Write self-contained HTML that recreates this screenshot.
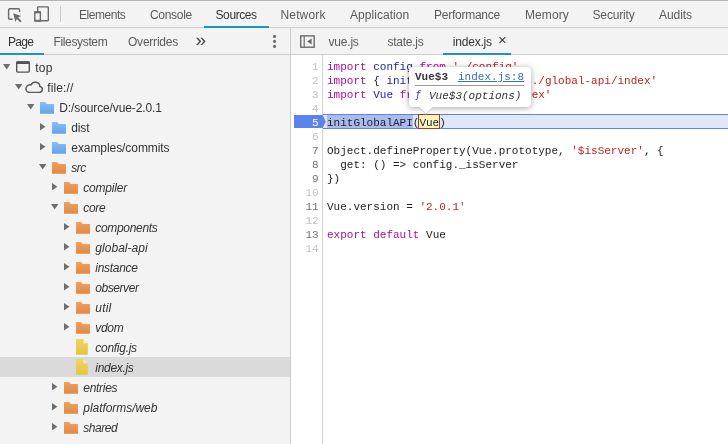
<!DOCTYPE html>
<html><head><meta charset="utf-8">
<style>
html,body{margin:0;padding:0;}
body{width:728px;height:444px;overflow:hidden;background:#fff;position:relative;font-family:"Liberation Sans",sans-serif;font-size:12px;color:#333;}
.abs{position:absolute;}
#topbar{left:0;top:0;width:728px;height:27px;background:#f3f3f3;border-top:1px solid #b4b4b4;border-bottom:1px solid #cdcdcd;box-sizing:content-box;height:26px;}
.tab{position:absolute;top:1px;height:26px;line-height:28px;color:#5a5a5a;white-space:nowrap;font-size:12px;}
.tab.sel{color:#333;}
#row2l{left:0;top:28px;width:290px;height:26px;background:#f3f3f3;border-bottom:1px solid #cdcdcd;}
#row2r{left:291px;top:28px;width:437px;height:26px;background:#f3f3f3;border-bottom:1px solid #cdcdcd;}
.t2{position:absolute;top:0;height:26px;line-height:29px;color:#5a5a5a;white-space:nowrap;}
.t2.sel{color:#333;}
#left{left:0;top:55px;width:290px;height:389px;background:#f3f3f3;}
#vdiv{left:290px;top:28px;width:1px;height:416px;background:#cdcdcd;}
.row{position:absolute;left:0;width:290px;height:20px;line-height:20px;white-space:nowrap;color:#333;}
.row span{position:absolute;top:1px;}
.row i{font-style:italic;}
.arr{position:absolute;width:0;height:0;}
.arr.d{border-left:4px solid transparent;border-right:4px solid transparent;border-top:6px solid #6e6e6e;top:7px;}
.arr.r{border-top:4px solid transparent;border-bottom:4px solid transparent;border-left:6px solid #6e6e6e;top:6px;}
.fold{position:absolute;top:4px;width:15px;height:12px;}
#gutter{left:291px;top:55px;width:31px;height:389px;background:#fff;border-right:1px solid #d2d2d2;}
.ln{position:absolute;right:4px;width:30px;text-align:right;font-family:"Liberation Mono",monospace;font-size:11px;line-height:14px;color:#c2c2c2;}
.cl{position:absolute;left:327px;font-family:"Liberation Mono",monospace;font-size:11px;line-height:14px;white-space:pre;color:#222;}
.pm{font-family:"Liberation Mono",monospace;font-size:11px;line-height:14px;white-space:pre;}
.k{color:#aa0d91;} .s{color:#b8251c;} .d{color:#1a1aa6;}
</style></head><body><div id="app" style="will-change:transform;position:absolute;left:0;top:0;width:728px;height:444px;overflow:hidden">
<div id="topbar" class="abs"></div>
<!-- inspect icon -->
<svg class="abs" style="left:7px;top:7px" width="17" height="16" viewBox="0 0 17 16"><path d="M12.5 5V2.9a1.1 1.1 0 0 0-1.1-1.1H2.7a1.1 1.1 0 0 0-1.1 1.1v8.2a1.1 1.1 0 0 0 1.1 1.1H5.6" fill="none" stroke="#6a6a6a" stroke-width="1.4"/><path d="M6.2 6.2l8 2.9-3 1.4 3.4 3.4-1.4 1.4-3.4-3.4-1.4 3z" fill="#6a6a6a"/></svg>
<svg class="abs" style="left:33px;top:5px" width="18" height="18" viewBox="0 0 18 18"><rect x="4.7" y="1.9" width="10.6" height="13.9" rx="0.6" fill="none" stroke="#6a6a6a" stroke-width="1.4"/><rect x="1.8" y="7" width="5.6" height="9" rx="0.6" fill="#f3f3f3" stroke="#6a6a6a" stroke-width="1.4"/><rect x="1.2" y="6.3" width="6.8" height="2" fill="#6a6a6a"/><rect x="1.2" y="14.8" width="6.8" height="1.7" fill="#6a6a6a"/></svg>
<div class="abs" style="left:60px;top:6px;width:1px;height:16px;background:#ccc"></div>
<div class="tab" style="left:79px;letter-spacing:-0.45px">Elements</div>
<div class="tab" style="left:150px;letter-spacing:-0.3px">Console</div>
<div class="tab sel" style="left:215.5px;letter-spacing:-0.4px">Sources</div>
<div class="abs" style="left:204px;top:26px;width:65px;height:2px;background:#1d94c4"></div>
<div class="tab" style="left:280.5px;letter-spacing:0.15px">Network</div>
<div class="tab" style="left:350px;letter-spacing:0.05px">Application</div>
<div class="tab" style="left:434px;letter-spacing:-0.25px">Performance</div>
<div class="tab" style="left:525px;letter-spacing:0.1px">Memory</div>
<div class="tab" style="left:592.5px;letter-spacing:-0.15px">Security</div>
<div class="tab" style="left:659px;letter-spacing:-0.05px">Audits</div>

<div id="row2l" class="abs">
 <div class="t2 sel" style="left:8px;letter-spacing:-0.7px">Page</div>
 <div class="t2" style="left:53.5px;letter-spacing:-0.35px">Filesystem</div>
 <div class="t2" style="left:128px;letter-spacing:-0.22px">Overrides</div>
 <div class="t2" style="left:195.5px;font-size:19px;line-height:24px;color:#444">»</div>
 <svg class="abs" style="left:271px;top:5px" width="7" height="18" viewBox="0 0 7 18"><circle cx="3.5" cy="3.4" r="1.55" fill="#6e6e6e"/><circle cx="3.5" cy="8.4" r="1.55" fill="#6e6e6e"/><circle cx="3.5" cy="13.4" r="1.55" fill="#6e6e6e"/></svg>
 <div class="abs" style="left:0;top:25px;width:44px;height:2px;background:#1d94c4"></div>
</div>
<div id="row2r" class="abs">
 <svg class="abs" style="left:9px;top:6px" width="16" height="16" viewBox="0 0 16 16"><rect x="0.7" y="1.9" width="13.5" height="11.3" fill="none" stroke="#6a6a6a" stroke-width="1.4"/><line x1="4.2" y1="2" x2="4.2" y2="13" stroke="#6a6a6a" stroke-width="1.2"/><path d="M11.6 4.5v6L7.1 7.5z" fill="#6a6a6a"/></svg>
 <div class="t2" style="left:37.5px;letter-spacing:-0.2px">vue.js</div>
 <div class="t2" style="left:96.5px;letter-spacing:-0.25px">state.js</div>
 <div class="t2 sel" style="left:161.8px;letter-spacing:-0.2px">index.js</div>
 <div class="t2" style="left:207px;font-size:15px;line-height:23px;color:#3c3c3c;">×</div>
 <div class="abs" style="left:152px;top:25px;width:68px;height:2px;background:#1d94c4"></div>
</div>
<div id="left" class="abs"></div>
<div id="vdiv" class="abs"></div>
<div id="tree">
<svg width="0" height="0" style="position:absolute"><defs><linearGradient id="gb" x1="0" y1="0" x2="0" y2="1"><stop offset="0" stop-color="#88bef7"/><stop offset="1" stop-color="#62a2ea"/></linearGradient><linearGradient id="go" x1="0" y1="0" x2="0" y2="1"><stop offset="0" stop-color="#f0a060"/><stop offset="1" stop-color="#e08a42"/></linearGradient><linearGradient id="gy" x1="0" y1="0" x2="0" y2="1"><stop offset="0" stop-color="#efd566"/><stop offset="1" stop-color="#e3c443"/></linearGradient></defs></svg>
<div class="row" style="top:57px"><svg class="abs" style="left:3px;top:7px" width="8" height="6" viewBox="0 0 8 6"><path d="M0 0h7.4L3.7 5.5z" fill="#6e6e6e"/></svg><svg class="abs" style="left:16px;top:4px" width="14" height="12" viewBox="0 0 14 12"><rect x="0.7" y="0.9" width="12.6" height="10.2" rx="1" fill="none" stroke="#555" stroke-width="1.4"/><rect x="0.3" y="0.3" width="13.4" height="2.6" rx="0.8" fill="#555"/></svg><span style="left:35.3px;letter-spacing:0.17px">top</span></div>
<div class="row" style="top:77px"><svg class="abs" style="left:15px;top:7px" width="8" height="6" viewBox="0 0 8 6"><path d="M0 0h7.4L3.7 5.5z" fill="#6e6e6e"/></svg><svg class="abs" style="left:23.8px;top:3.5px" width="20.5" height="12.6" viewBox="0 0 19 12" preserveAspectRatio="none"><path d="M4.6 10.9h9.6a2.9 2.9 0 0 0 .5-5.75A4.3 4.3 0 0 0 6.5 3.7 3.65 3.65 0 0 0 4.6 10.9z" fill="none" stroke="#5a5a5a" stroke-width="1.4"/></svg><span style="left:47.3px;letter-spacing:0.11px">file://</span></div>
<div class="row" style="top:97px"><svg class="abs" style="left:27px;top:7px" width="8" height="6" viewBox="0 0 8 6"><path d="M0 0h7.4L3.7 5.5z" fill="#6e6e6e"/></svg><svg class="abs" style="left:40px;top:5px" width="14" height="12" viewBox="0 0 14 12"><path d="M0 0.6a.6.6 0 0 1 .6-.6h4.6l1.5 2.1h6.7a.6.6 0 0 1 .6.6v8.5a.6.6 0 0 1-.6.6H.6a.6.6 0 0 1-.6-.6z" fill="url(#gb)"/></svg><span style="left:59.3px;letter-spacing:-0.12px">D:/source/vue-2.0.1</span></div>
<div class="row" style="top:117px"><svg class="abs" style="left:40px;top:6px" width="6" height="8" viewBox="0 0 6 8"><path d="M0 0v7.6L5.4 3.8z" fill="#6e6e6e"/></svg><svg class="abs" style="left:52px;top:5px" width="14" height="12" viewBox="0 0 14 12"><path d="M0 0.6a.6.6 0 0 1 .6-.6h4.6l1.5 2.1h6.7a.6.6 0 0 1 .6.6v8.5a.6.6 0 0 1-.6.6H.6a.6.6 0 0 1-.6-.6z" fill="url(#gb)"/></svg><span style="left:71.3px;letter-spacing:-0.17px">dist</span></div>
<div class="row" style="top:137px"><svg class="abs" style="left:40px;top:6px" width="6" height="8" viewBox="0 0 6 8"><path d="M0 0v7.6L5.4 3.8z" fill="#6e6e6e"/></svg><svg class="abs" style="left:52px;top:5px" width="14" height="12" viewBox="0 0 14 12"><path d="M0 0.6a.6.6 0 0 1 .6-.6h4.6l1.5 2.1h6.7a.6.6 0 0 1 .6.6v8.5a.6.6 0 0 1-.6.6H.6a.6.6 0 0 1-.6-.6z" fill="url(#gb)"/></svg><span style="left:71.3px;letter-spacing:-0.07px">examples/commits</span></div>
<div class="row" style="top:157px"><svg class="abs" style="left:39px;top:7px" width="8" height="6" viewBox="0 0 8 6"><path d="M0 0h7.4L3.7 5.5z" fill="#6e6e6e"/></svg><svg class="abs" style="left:52px;top:5px" width="14" height="12" viewBox="0 0 14 12"><path d="M0 0.6a.6.6 0 0 1 .6-.6h4.6l1.5 2.1h6.7a.6.6 0 0 1 .6.6v8.5a.6.6 0 0 1-.6.6H.6a.6.6 0 0 1-.6-.6z" fill="url(#go)"/></svg><span style="left:71.3px;letter-spacing:-0.53px"><i>src</i></span></div>
<div class="row" style="top:177px"><svg class="abs" style="left:52px;top:6px" width="6" height="8" viewBox="0 0 6 8"><path d="M0 0v7.6L5.4 3.8z" fill="#6e6e6e"/></svg><svg class="abs" style="left:64px;top:5px" width="14" height="12" viewBox="0 0 14 12"><path d="M0 0.6a.6.6 0 0 1 .6-.6h4.6l1.5 2.1h6.7a.6.6 0 0 1 .6.6v8.5a.6.6 0 0 1-.6.6H.6a.6.6 0 0 1-.6-.6z" fill="url(#go)"/></svg><span style="left:83.3px;letter-spacing:-0.20px"><i>compiler</i></span></div>
<div class="row" style="top:197px"><svg class="abs" style="left:51px;top:7px" width="8" height="6" viewBox="0 0 8 6"><path d="M0 0h7.4L3.7 5.5z" fill="#6e6e6e"/></svg><svg class="abs" style="left:64px;top:5px" width="14" height="12" viewBox="0 0 14 12"><path d="M0 0.6a.6.6 0 0 1 .6-.6h4.6l1.5 2.1h6.7a.6.6 0 0 1 .6.6v8.5a.6.6 0 0 1-.6.6H.6a.6.6 0 0 1-.6-.6z" fill="url(#go)"/></svg><span style="left:83.3px;letter-spacing:-0.36px"><i>core</i></span></div>
<div class="row" style="top:217px"><svg class="abs" style="left:64px;top:6px" width="6" height="8" viewBox="0 0 6 8"><path d="M0 0v7.6L5.4 3.8z" fill="#6e6e6e"/></svg><svg class="abs" style="left:76px;top:5px" width="14" height="12" viewBox="0 0 14 12"><path d="M0 0.6a.6.6 0 0 1 .6-.6h4.6l1.5 2.1h6.7a.6.6 0 0 1 .6.6v8.5a.6.6 0 0 1-.6.6H.6a.6.6 0 0 1-.6-.6z" fill="url(#go)"/></svg><span style="left:95.3px;letter-spacing:-0.32px"><i>components</i></span></div>
<div class="row" style="top:237px"><svg class="abs" style="left:64px;top:6px" width="6" height="8" viewBox="0 0 6 8"><path d="M0 0v7.6L5.4 3.8z" fill="#6e6e6e"/></svg><svg class="abs" style="left:76px;top:5px" width="14" height="12" viewBox="0 0 14 12"><path d="M0 0.6a.6.6 0 0 1 .6-.6h4.6l1.5 2.1h6.7a.6.6 0 0 1 .6.6v8.5a.6.6 0 0 1-.6.6H.6a.6.6 0 0 1-.6-.6z" fill="url(#go)"/></svg><span style="left:95.3px;letter-spacing:0.04px"><i>global-api</i></span></div>
<div class="row" style="top:257px"><svg class="abs" style="left:64px;top:6px" width="6" height="8" viewBox="0 0 6 8"><path d="M0 0v7.6L5.4 3.8z" fill="#6e6e6e"/></svg><svg class="abs" style="left:76px;top:5px" width="14" height="12" viewBox="0 0 14 12"><path d="M0 0.6a.6.6 0 0 1 .6-.6h4.6l1.5 2.1h6.7a.6.6 0 0 1 .6.6v8.5a.6.6 0 0 1-.6.6H.6a.6.6 0 0 1-.6-.6z" fill="url(#go)"/></svg><span style="left:95.3px;letter-spacing:-0.29px"><i>instance</i></span></div>
<div class="row" style="top:277px"><svg class="abs" style="left:64px;top:6px" width="6" height="8" viewBox="0 0 6 8"><path d="M0 0v7.6L5.4 3.8z" fill="#6e6e6e"/></svg><svg class="abs" style="left:76px;top:5px" width="14" height="12" viewBox="0 0 14 12"><path d="M0 0.6a.6.6 0 0 1 .6-.6h4.6l1.5 2.1h6.7a.6.6 0 0 1 .6.6v8.5a.6.6 0 0 1-.6.6H.6a.6.6 0 0 1-.6-.6z" fill="url(#go)"/></svg><span style="left:95.3px;letter-spacing:-0.44px"><i>observer</i></span></div>
<div class="row" style="top:297px"><svg class="abs" style="left:64px;top:6px" width="6" height="8" viewBox="0 0 6 8"><path d="M0 0v7.6L5.4 3.8z" fill="#6e6e6e"/></svg><svg class="abs" style="left:76px;top:5px" width="14" height="12" viewBox="0 0 14 12"><path d="M0 0.6a.6.6 0 0 1 .6-.6h4.6l1.5 2.1h6.7a.6.6 0 0 1 .6.6v8.5a.6.6 0 0 1-.6.6H.6a.6.6 0 0 1-.6-.6z" fill="url(#go)"/></svg><span style="left:95.3px;letter-spacing:0.21px"><i>util</i></span></div>
<div class="row" style="top:317px"><svg class="abs" style="left:64px;top:6px" width="6" height="8" viewBox="0 0 6 8"><path d="M0 0v7.6L5.4 3.8z" fill="#6e6e6e"/></svg><svg class="abs" style="left:76px;top:5px" width="14" height="12" viewBox="0 0 14 12"><path d="M0 0.6a.6.6 0 0 1 .6-.6h4.6l1.5 2.1h6.7a.6.6 0 0 1 .6.6v8.5a.6.6 0 0 1-.6.6H.6a.6.6 0 0 1-.6-.6z" fill="url(#go)"/></svg><span style="left:95.3px;letter-spacing:-0.33px"><i>vdom</i></span></div>
<div class="row" style="top:337px"><svg class="abs" style="left:76px;top:2px" width="12" height="16" viewBox="0 0 12 16"><path d="M0 0h7.5l4.3 4.3v11.4H0z" fill="url(#gy)"/><path d="M7.5 0v4.3h4.3z" fill="#f8efc4"/></svg><span style="left:95.3px;letter-spacing:-0.28px"><i>config.js</i></span></div>
<div class="row" style="top:357px;background:#dadada"><svg class="abs" style="left:76px;top:2px" width="12" height="16" viewBox="0 0 12 16"><path d="M0 0h7.5l4.3 4.3v11.4H0z" fill="url(#gy)"/><path d="M7.5 0v4.3h4.3z" fill="#f8efc4"/></svg><span style="left:95.3px;letter-spacing:-0.31px"><i>index.js</i></span></div>
<div class="row" style="top:377px"><svg class="abs" style="left:52px;top:6px" width="6" height="8" viewBox="0 0 6 8"><path d="M0 0v7.6L5.4 3.8z" fill="#6e6e6e"/></svg><svg class="abs" style="left:64px;top:5px" width="14" height="12" viewBox="0 0 14 12"><path d="M0 0.6a.6.6 0 0 1 .6-.6h4.6l1.5 2.1h6.7a.6.6 0 0 1 .6.6v8.5a.6.6 0 0 1-.6.6H.6a.6.6 0 0 1-.6-.6z" fill="url(#go)"/></svg><span style="left:83.3px;letter-spacing:-0.29px"><i>entries</i></span></div>
<div class="row" style="top:397px"><svg class="abs" style="left:52px;top:6px" width="6" height="8" viewBox="0 0 6 8"><path d="M0 0v7.6L5.4 3.8z" fill="#6e6e6e"/></svg><svg class="abs" style="left:64px;top:5px" width="14" height="12" viewBox="0 0 14 12"><path d="M0 0.6a.6.6 0 0 1 .6-.6h4.6l1.5 2.1h6.7a.6.6 0 0 1 .6.6v8.5a.6.6 0 0 1-.6.6H.6a.6.6 0 0 1-.6-.6z" fill="url(#go)"/></svg><span style="left:83.3px;letter-spacing:-0.05px"><i>platforms/web</i></span></div>
<div class="row" style="top:417px"><svg class="abs" style="left:52px;top:6px" width="6" height="8" viewBox="0 0 6 8"><path d="M0 0v7.6L5.4 3.8z" fill="#6e6e6e"/></svg><svg class="abs" style="left:64px;top:5px" width="14" height="12" viewBox="0 0 14 12"><path d="M0 0.6a.6.6 0 0 1 .6-.6h4.6l1.5 2.1h6.7a.6.6 0 0 1 .6.6v8.5a.6.6 0 0 1-.6.6H.6a.6.6 0 0 1-.6-.6z" fill="url(#go)"/></svg><span style="left:83.3px;letter-spacing:-0.45px"><i>shared</i></span></div>
</div><!--/tree-->
<div id="gutter" class="abs"></div>
<div id="hl" class="abs" style="left:323px;top:114px;width:405px;height:13px;background:#dfe8fb;border-top:1px solid #5d84e0;border-bottom:1px solid #5d84e0"></div>
<div class="abs" style="left:327px;top:115px;width:86px;height:13px;background:#aabbee"></div>
<div class="abs" style="left:418px;top:114px;width:20px;height:13px;background:#fdf5c0;border:1px solid #a83a20"></div>
<svg class="abs" style="left:294px;top:115px" width="33" height="13" viewBox="0 0 33 13"><path d="M0 0h28.7l3 6.5-3 6.5H0z" fill="#5b82ee"/></svg>
<div id="code">
<div class="ln" style="left:288.7px;top:60px">1</div>
<div class="ln" style="left:288.7px;top:74px">2</div>
<div class="ln" style="left:288.7px;top:88px">3</div>
<div class="ln" style="left:288.7px;top:102px">4</div>
<div class="ln" style="left:288.7px;top:116px;color:#fff">5</div>
<div class="ln" style="left:288.7px;top:130px">6</div>
<div class="ln" style="left:288.7px;top:144px;color:#737373">7</div>
<div class="ln" style="left:288.7px;top:158px;color:#737373">8</div>
<div class="ln" style="left:288.7px;top:172px;color:#737373">9</div>
<div class="ln" style="left:288.7px;top:186px">10</div>
<div class="ln" style="left:288.7px;top:200px;color:#737373">11</div>
<div class="ln" style="left:288.7px;top:214px">12</div>
<div class="ln" style="left:288.7px;top:228px;color:#737373">13</div>
<div class="ln" style="left:288.7px;top:242px">14</div>
<div class="cl" style="top:60px"><span class="k">import</span> <span class="d">config</span> <span class="k">from</span> <span class="s">'./config'</span></div>
<div class="cl" style="top:74px"><span class="k">import</span> { <span class="d">initGlobalAPI</span> } <span class="k">from</span> <span class="s">'./global-api/index'</span></div>
<div class="cl" style="top:88px"><span class="k">import</span> <span class="d">Vue</span> <span class="k">from</span> <span class="s">'./instance/index'</span></div>
<div class="cl" style="top:116px">initGlobalAPI(Vue)</div>
<div class="cl" style="top:144px">Object.defineProperty(Vue.prototype, <span class="s">'$isServer'</span>, {</div>
<div class="cl" style="top:158px">  get: () =&gt; config._isServer</div>
<div class="cl" style="top:172px">})</div>
<div class="cl" style="top:200px">Vue.version = <span class="s">'2.0.1'</span></div>
<div class="cl" style="top:228px"><span class="k">export</span> <span class="k">default</span> Vue</div>
</div><!--/code-->
<div id="pop" class="abs" style="left:409px;top:67px;width:122px;height:40px;background:#fff;border-radius:4px;box-shadow:0 1px 6px rgba(0,0,0,.36)"></div>
<svg class="abs" style="left:417px;top:106px" width="18" height="9" viewBox="0 0 18 9"><path d="M2 0.5l7 7.5 7-7.5z" fill="#fff"/><path d="M2.5 1.5l6.5 6.8 6.5-6.8" fill="none" stroke="#d0d0d0" stroke-width="1"/></svg>
<div class="abs pm" style="left:415px;top:70px;font-weight:bold;color:#383838">Vue$3</div>
<div class="abs pm" style="left:458px;top:70px;color:#3a6fb5;text-decoration:underline">index.js:8</div>
<div class="abs" style="left:415px;top:85px;width:109px;height:1px;background:#9a9a9a"></div>
<div class="abs pm" style="left:415px;top:88px;color:#3838b8;font-style:italic;font-family:'DejaVu Sans Mono','Liberation Mono',monospace;font-size:10px">ƒ</div>
<div class="abs pm" style="left:429px;top:89px;color:#333;font-style:italic">Vue$3(options)</div>
</div></body></html>
